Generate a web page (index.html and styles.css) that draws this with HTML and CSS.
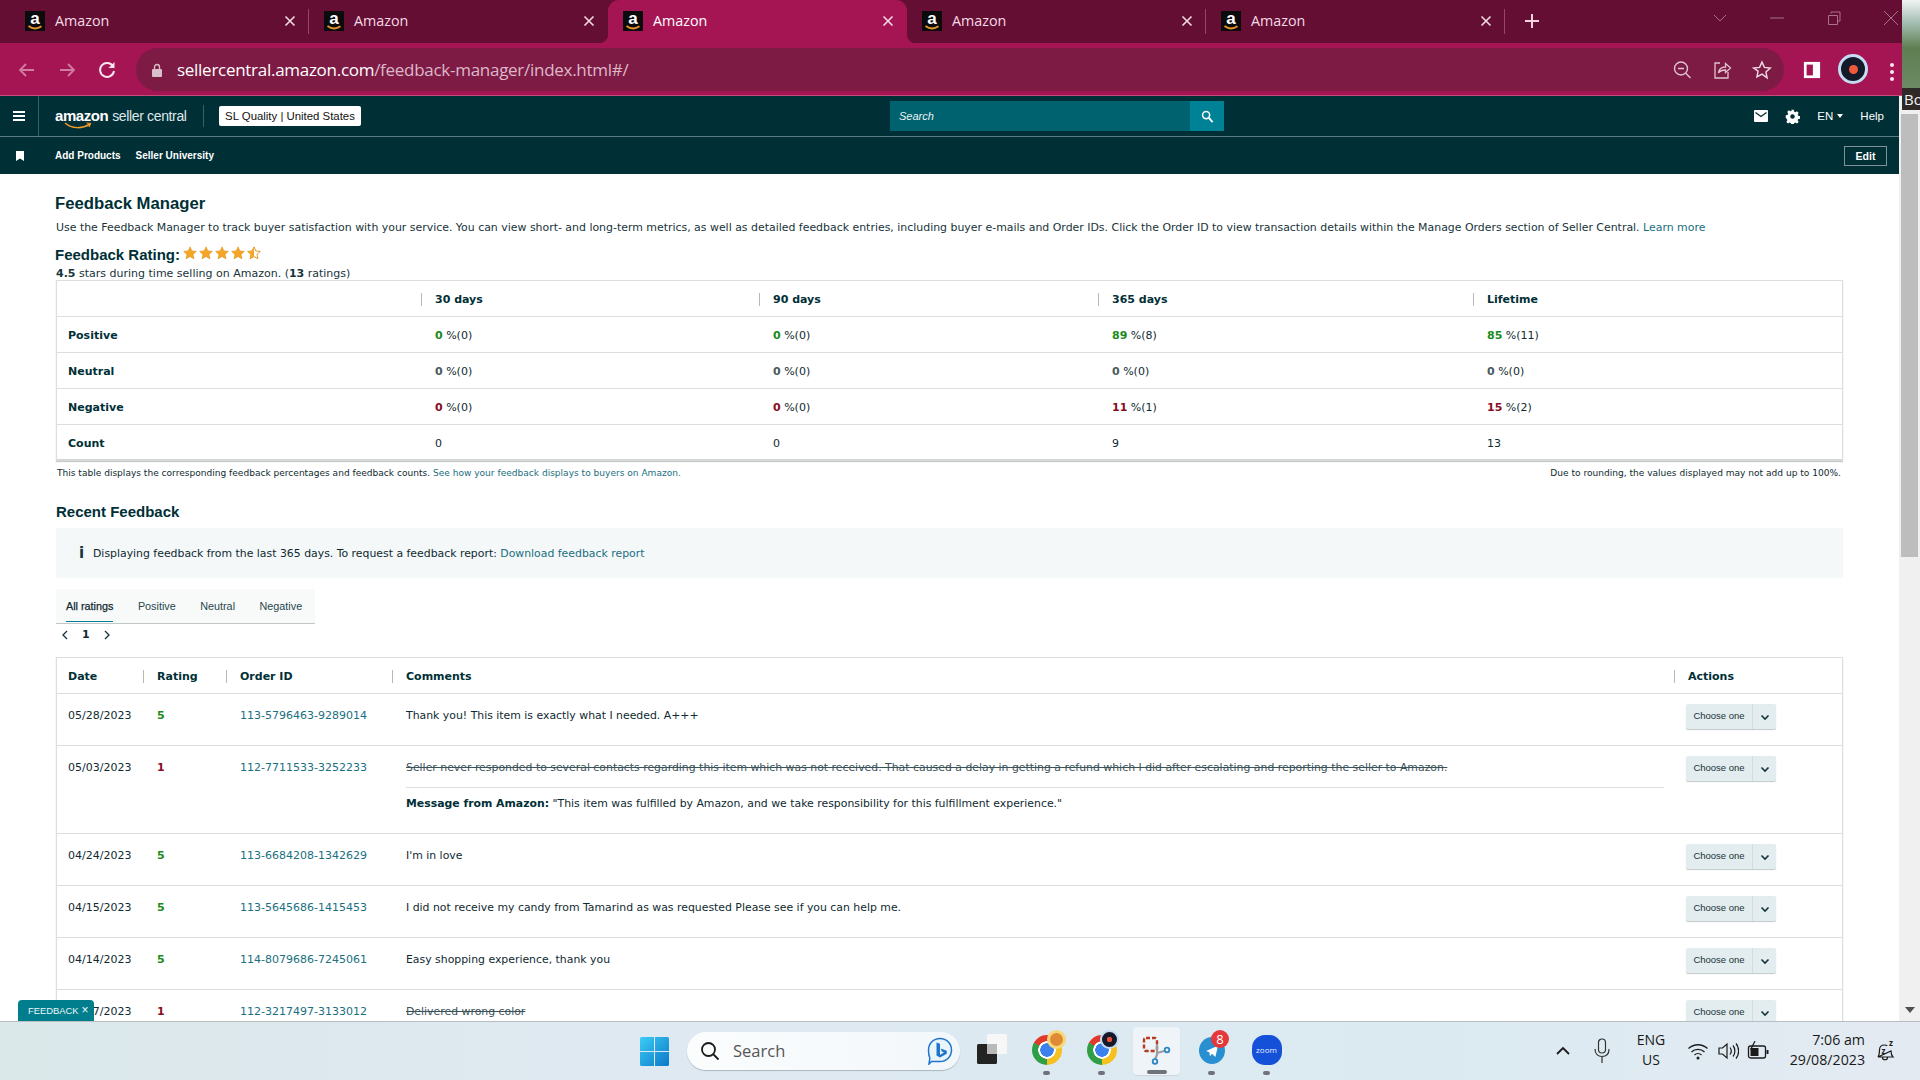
FILE: index.html
```html
<!DOCTYPE html>
<html lang="en">
<head>
<meta charset="utf-8">
<title>Amazon</title>
<link rel="stylesheet" href="styles.css">
</head>
<body>
<svg class="defs" width="0" height="0" aria-hidden="true">
  <defs>
    <symbol id="fav" viewBox="0 0 20 20">
      <rect width="20" height="20" fill="#0b0b0b"/>
      <text x="10" y="13" text-anchor="middle" font-family="Liberation Sans" font-weight="700" font-size="17" fill="#fff">a</text>
      <path d="M3.500 15c4 3 9 3 13 .2" fill="none" stroke="#e8962a" stroke-width="1.800"/>
    </symbol>
    <symbol id="star" viewBox="0 0 24 24">
      <path d="M12 1.500l3.200 7 7.600.8-5.700 5.100 1.600 7.500L12 18.100l-6.700 3.800 1.600-7.500L1.200 9.300l7.600-.8z" fill="#f5a623" stroke="#d98a12" stroke-width="1"/>
    </symbol>
    <symbol id="chev" viewBox="0 0 12 12">
      <path d="M2.500 4.500L6 8l3.500-3.500" fill="none" stroke="#12343b" stroke-width="1.600"/>
    </symbol>
    <symbol id="close" viewBox="0 0 12 12">
      <path d="M1.500 1.500l9 9M10.500 1.500l-9 9" fill="none" stroke="#f3dbe5" stroke-width="1.600"/>
    </symbol>
  </defs>
</svg>

<div class="screen">
  <div class="top">
    <div class="browser">
      <div class="tabstrip">
        <div class="tab tab-sep"><svg class="fav"><use href="#fav"/></svg><span class="tab-title">Amazon</span><svg class="tab-x"><use href="#close"/></svg></div>
        <div class="tab"><svg class="fav"><use href="#fav"/></svg><span class="tab-title">Amazon</span><svg class="tab-x"><use href="#close"/></svg></div>
        <div class="tab tab-active"><svg class="fav"><use href="#fav"/></svg><span class="tab-title">Amazon</span><svg class="tab-x"><use href="#close"/></svg></div>
        <div class="tab tab-sep"><svg class="fav"><use href="#fav"/></svg><span class="tab-title">Amazon</span><svg class="tab-x"><use href="#close"/></svg></div>
        <div class="tab tab-sep"><svg class="fav"><use href="#fav"/></svg><span class="tab-title">Amazon</span><svg class="tab-x"><use href="#close"/></svg></div>
        <svg class="newtab" viewBox="0 0 16 16"><path d="M8 1v14M1 8h14" stroke="#f0d5e0" stroke-width="2"/></svg>
        <div class="winctl">
          <svg class="wc wc-v" viewBox="0 0 14 14"><path d="M1 4l6 6 6-6" fill="none" stroke="#a9718a" stroke-width="1"/></svg>
          <svg class="wc wc-m" viewBox="0 0 14 14"><path d="M0 7h14" stroke="#a9718a" stroke-width="1"/></svg>
          <svg class="wc wc-r" viewBox="0 0 14 14"><path d="M1.500 4.500h9v9h-9zM4 2.500V1h9v9h-2" fill="none" stroke="#a9718a" stroke-width="1"/></svg>
          <svg class="wc wc-x" viewBox="0 0 14 14"><path d="M0 0l14 14M14 0L0 14" stroke="#a9718a" stroke-width="1"/></svg>
        </div>
      </div>
      <div class="toolbar">
        <span class="tb-slot"><svg class="ic20" viewBox="0 0 20 20"><path d="M17 10H3M9 4l-6 6 6 6" fill="none" stroke="#cf7c9e" stroke-width="1.800"/></svg></span>
        <span class="tb-slot"><svg class="ic20" viewBox="0 0 20 20"><path d="M3 10h14M11 4l6 6-6 6" fill="none" stroke="#cf7c9e" stroke-width="1.800"/></svg></span>
        <span class="tb-slot"><svg class="ic20" viewBox="0 0 20 20"><path d="M16.200 6.500A7 7 0 1 0 17 11" fill="none" stroke="#f7e6ed" stroke-width="2"/><path d="M17.500 2v6h-6z" fill="#f7e6ed"/></svg></span>
        <div class="omnibox">
          <svg class="lock" viewBox="0 0 10 14"><path d="M2.500 6V4a2.500 2.500 0 0 1 5 0v2" fill="none" stroke="#d9bfcb" stroke-width="1.300"/><rect y="6" width="10" height="8" rx="1" fill="#d9bfcb"/></svg>
          <span class="url"><span class="url-host">sellercentral.amazon.com</span>/feedback-manager/index.html#/</span>
          <div class="omni-icons">
            <span class="tb-slot"><svg class="ic20" viewBox="0 0 20 20"><circle cx="9" cy="8.500" r="6.500" fill="none" stroke="#e0c3d0" stroke-width="1.400"/><path d="M6 8.500h6M13.800 13.300l4.700 4.700" stroke="#e0c3d0" stroke-width="1.400"/></svg></span>
            <span class="tb-slot"><svg class="ic20" viewBox="0 0 20 20"><path d="M8 3H3v15h13v-6" fill="none" stroke="#e0c3d0" stroke-width="1.300"/><path d="M6.500 13c.5-4 3.500-6 7-6V3.500L18.500 8l-5 4.500V10c-3 0-5.500.8-7 3z" fill="none" stroke="#e0c3d0" stroke-width="1.300"/></svg></span>
            <span class="tb-slot"><svg class="ic20" viewBox="0 0 24 24"><path d="M12 2.500l2.900 6.400 7 .8-5.200 4.700 1.400 6.900L12 16.900l-6.100 3.400 1.400-6.900L2.100 9.700l7-.8z" fill="none" stroke="#f0dbe4" stroke-width="1.700"/></svg></span>
          </div>
        </div>
        <span class="tb-slot tb-panel"><svg class="ic20" viewBox="0 0 20 20"><path d="M1 1h18v18H1z" fill="#fff"/><path d="M4 4h7v12H4z" fill="#a5154f"/></svg></span>
        <span class="avatar"><span class="avatar-core"></span></span>
        <span class="tb-dots"><i></i><i></i><i></i></span>
      </div>
    </div>
    <div class="wall"><span class="wall-label">Bo</span></div>
  </div>

  <div class="viewport">
    <div class="page">
      <header class="sc-head">
        <span class="burger"><i></i><i></i><i></i></span>
        <span class="logo"><span class="logo-a">amazon</span><span class="logo-b">seller central</span><svg class="logo-smile" viewBox="0 0 28 8"><path d="M1 1c7 6 17 6 25 1" fill="none" stroke="#f09a28" stroke-width="1.500"/><path d="M22.500 1l4 .5-1.500 3.500" fill="none" stroke="#f09a28" stroke-width="1.200"/></svg></span>
        <span class="head-div"></span>
        <span class="acct">SL Quality | United States</span>
        <div class="search"><span class="search-in">Search</span><span class="search-btn"><svg viewBox="0 0 14 14" width="13" height="13"><circle cx="5.500" cy="5.500" r="3.800" fill="none" stroke="#fff" stroke-width="1.600"/><path d="M8.500 8.500l4 4.500" stroke="#fff" stroke-width="2"/></svg></span></div>
        <div class="head-right">
          <svg class="mail" viewBox="0 0 14 12"><rect width="14" height="12" rx="1" fill="#fff"/><path d="M1.500 2.500L7 6.500l5.500-4" fill="none" stroke="#002f36" stroke-width="1.300"/></svg>
          <svg class="gear" viewBox="0 0 16 16"><path d="M6.500 0h3l.4 2.200 1.500.7 1.900-1.200 2 2.100-1.200 1.800.7 1.600 2.200.4v3l-2.200.4-.7 1.500 1.200 1.900-2 2-1.900-1.200-1.500.7-.4 2.200h-3l-.4-2.200-1.500-.7-1.900 1.200-2-2 1.200-1.900-.7-1.500L0 9.500v-3l2.200-.4.700-1.600L1.700 2.700l2-2.100 1.900 1.200 1.500-.7z" transform="translate(.8 .8) scale(.9)" fill="#fff"/><circle cx="8" cy="8" r="2.400" fill="#002f36"/></svg>
          <span class="lang">EN<i class="caret"></i></span>
          <span class="help">Help</span>
        </div>
      </header>
      <nav class="sc-nav">
        <svg class="bookmark" viewBox="0 0 8 10"><path d="M0 0h8v10L4 7.500 0 10z" fill="#fff"/></svg>
        <a class="nav-link">Add Products</a>
        <a class="nav-link">Seller University</a>
        <span class="edit">Edit</span>
      </nav>

      <main class="content">
        <h1 class="h-main">Feedback Manager</h1>
        <p class="desc">Use the Feedback Manager to track buyer satisfaction with your service. You can view short- and long-term metrics, as well as detailed feedback entries, including buyer e-mails and Order IDs. Click the Order ID to view transaction details within the Manage Orders section of Seller Central. <a class="link">Learn more</a></p>
        <div class="rating-title">Feedback Rating:<span class="stars"><svg><use href="#star"/></svg><svg><use href="#star"/></svg><svg><use href="#star"/></svg><svg><use href="#star"/></svg><svg class="star-half" viewBox="0 0 24 24"><path d="M12 1.500l3.200 7 7.600.8-5.700 5.100 1.600 7.500L12 18.100l-6.700 3.800 1.600-7.500L1.200 9.300l7.600-.8z" fill="#fff" stroke="#d98a12" stroke-width="1.500"/><path d="M12 1.500v16.600l-6.700 3.800 1.600-7.500L1.200 9.300l7.600-.8z" fill="#f5a623"/></svg></span></div>
        <div class="rating-sub"><b>4.5</b> stars during time selling on Amazon. (<b>13</b> ratings)</div>

        <table class="tbl tbl-sum">
          <colgroup><col class="s1"><col class="s2"><col class="s3"><col class="s4"><col class="s5"></colgroup>
          <thead><tr><th></th><th><span class="th-in">30 days</span></th><th><span class="th-in">90 days</span></th><th><span class="th-in">365 days</span></th><th><span class="th-in">Lifetime</span></th></tr></thead>
          <tbody>
            <tr><th class="rowh">Positive</th><td><b class="pos">0</b> %(0)</td><td><b class="pos">0</b> %(0)</td><td><b class="pos">89</b> %(8)</td><td><b class="pos">85</b> %(11)</td></tr>
            <tr><th class="rowh">Neutral</th><td><b class="neu">0</b> %(0)</td><td><b class="neu">0</b> %(0)</td><td><b class="neu">0</b> %(0)</td><td><b class="neu">0</b> %(0)</td></tr>
            <tr><th class="rowh">Negative</th><td><b class="neg">0</b> %(0)</td><td><b class="neg">0</b> %(0)</td><td><b class="neg">11</b> %(1)</td><td><b class="neg">15</b> %(2)</td></tr>
            <tr><th class="rowh">Count</th><td>0</td><td>0</td><td>9</td><td>13</td></tr>
          </tbody>
        </table>
        <div class="tbl-note"><span>This table displays the corresponding feedback percentages and feedback counts. <a class="link">See how your feedback displays to buyers on Amazon.</a></span><span>Due to rounding, the values displayed may not add up to 100%.</span></div>

        <h2 class="h-sub">Recent Feedback</h2>
        <div class="info"><span class="info-i">i</span><span>Displaying feedback from the last 365 days. To request a feedback report: <a class="link">Download feedback report</a></span></div>

        <div class="ftabs"><span class="ftab ftab-on">All ratings</span><span class="ftab">Positive</span><span class="ftab">Neutral</span><span class="ftab">Negative</span></div>
        <div class="pager">
          <svg viewBox="0 0 8 10" class="pg-ar"><path d="M6 1L2 5l4 4" fill="none" stroke="#12343b" stroke-width="1.300"/></svg>
          <b>1</b>
          <svg viewBox="0 0 8 10" class="pg-ar"><path d="M2 1l4 4-4 4" fill="none" stroke="#12343b" stroke-width="1.300"/></svg>
        </div>

        <table class="tbl tbl-fb">
          <colgroup><col class="f1"><col class="f2"><col class="f3"><col class="f4"><col class="f5"></colgroup>
          <thead><tr><th class="first">Date</th><th><span class="th-in">Rating</span></th><th><span class="th-in">Order ID</span></th><th><span class="th-in">Comments</span></th><th><span class="th-in">Actions</span></th></tr></thead>
          <tbody>
            <tr>
              <td class="first">05/28/2023</td><td><b class="pos">5</b></td><td><a class="link">113-5796463-9289014</a></td>
              <td class="cmt">Thank you! This item is exactly what I needed. A+++</td>
              <td class="act"><span class="choose"><span class="choose-t">Choose one</span><span class="choose-a"><svg><use href="#chev"/></svg></span></span></td>
            </tr>
            <tr class="tall">
              <td class="first">05/03/2023</td><td><b class="neg">1</b></td><td><a class="link">112-7711533-3252233</a></td>
              <td class="cmt cmt-split"><div class="struck struck-row">Seller never responded to several contacts regarding this item which was not received. That caused a delay in getting a refund which I did after escalating and reporting the seller to Amazon.</div><div class="amz-msg"><b>Message from Amazon:</b> "This item was fulfilled by Amazon, and we take responsibility for this fulfillment experience."</div></td>
              <td class="act"><span class="choose"><span class="choose-t">Choose one</span><span class="choose-a"><svg><use href="#chev"/></svg></span></span></td>
            </tr>
            <tr>
              <td class="first">04/24/2023</td><td><b class="pos">5</b></td><td><a class="link">113-6684208-1342629</a></td>
              <td class="cmt">I'm in love</td>
              <td class="act"><span class="choose"><span class="choose-t">Choose one</span><span class="choose-a"><svg><use href="#chev"/></svg></span></span></td>
            </tr>
            <tr>
              <td class="first">04/15/2023</td><td><b class="pos">5</b></td><td><a class="link">113-5645686-1415453</a></td>
              <td class="cmt">I did not receive my candy from Tamarind as was requested Please see if you can help me.</td>
              <td class="act"><span class="choose"><span class="choose-t">Choose one</span><span class="choose-a"><svg><use href="#chev"/></svg></span></span></td>
            </tr>
            <tr>
              <td class="first">04/14/2023</td><td><b class="pos">5</b></td><td><a class="link">114-8079686-7245061</a></td>
              <td class="cmt">Easy shopping experience, thank you</td>
              <td class="act"><span class="choose"><span class="choose-t">Choose one</span><span class="choose-a"><svg><use href="#chev"/></svg></span></span></td>
            </tr>
            <tr>
              <td class="first">04/07/2023</td><td><b class="neg">1</b></td><td><a class="link">112-3217497-3133012</a></td>
              <td class="cmt"><span class="struck">Delivered wrong color</span></td>
              <td class="act"><span class="choose"><span class="choose-t">Choose one</span><span class="choose-a"><svg><use href="#chev"/></svg></span></span></td>
            </tr>
          </tbody>
        </table>
      </main>
      <div class="fb-tag">FEEDBACK<span class="fb-x">×</span></div>
    </div>
    <div class="scrollbar">
      <div class="sb-thumb"></div>
      <i class="sb-down"></i>
    </div>
  </div>

  <footer class="taskbar">
    <svg class="winlogo" viewBox="0 0 29 29"><defs><linearGradient id="wg" x1="0" y1="0" x2="1" y2="1"><stop offset="0" stop-color="#3ccdf6"/><stop offset="1" stop-color="#0b78c8"/></linearGradient></defs><path d="M0 1.500A1.500 1.500 0 0 1 1.500 0H14v14H0zM15 0h12.500A1.500 1.500 0 0 1 29 1.500V14H15zM0 15h14v14H1.500A1.500 1.500 0 0 1 0 27.500zM15 15h14v12.500a1.500 1.500 0 0 1-1.500 1.500H15z" fill="url(#wg)"/></svg>
    <div class="tsearch">
      <svg class="ts-q" viewBox="0 0 20 20"><circle cx="8.500" cy="8.500" r="6.500" fill="none" stroke="#1a1a1a" stroke-width="1.800"/><path d="M13 13l5.500 5.500" stroke="#1a1a1a" stroke-width="1.800"/></svg>
      <span class="ts-t">Search</span>
      <svg class="ts-b" viewBox="0 0 26 28"><path d="M13 1.500c6.500 0 11.500 5 11.500 11.500S19.500 24.500 13 24.500H4.500L2 27l.8-6C1.800 18.800 1.500 16 1.500 13 1.500 6.500 6.500 1.500 13 1.500z" fill="#eaf4fb" stroke="#1f76c9" stroke-width="1.500"/><path d="M9.500 5.500l3.500 1.200v11l4-2.200-2.200-1-1-3 6 2.300v3L13 20.500l-3.500-2z" fill="#1f76c9"/></svg>
    </div>
    <div class="apps">
      <span class="app"><svg class="files" viewBox="0 0 30 30"><rect x="0" y="10" width="20" height="20" rx="1.500" fill="#232323"/><rect x="10" y="0" width="20" height="20" rx="1.500" fill="#f7f7f7"/><rect x="10" y="10" width="10" height="10" fill="#b9b9b9"/></svg></span>
      <span class="app app-dot"><span class="cr"></span><span class="cr-badge cr-b1"></span></span>
      <span class="app app-dot"><span class="cr"></span><span class="cr-badge cr-b2"></span></span>
      <span class="app app-on"><svg class="snip" viewBox="0 0 30 30"><rect x="2" y="3" width="13" height="13" rx="2" fill="none" stroke="#b83a20" stroke-width="2.400" stroke-dasharray="4 2"/><path d="M15 9v11l-2 4M15 18l7-2" fill="none" stroke="#9b9ea1" stroke-width="2.200"/><circle cx="13" cy="26.500" r="2.300" fill="none" stroke="#2a86c9" stroke-width="1.800"/><circle cx="25" cy="15" r="2.300" fill="none" stroke="#2a86c9" stroke-width="1.800"/></svg></span>
      <span class="app app-dot"><span class="tg"><svg viewBox="0 0 24 24" width="16" height="16"><path d="M3 12L21 4l-4 17-5-5-3 4-1-6z" fill="#fff"/></svg></span><span class="tg-badge">8</span></span>
      <span class="app app-dot"><span class="zoom">zoom</span></span>
    </div>
    <div class="tray">
      <svg class="tr-chev" viewBox="0 0 16 10"><path d="M2 8l6-6 6 6" fill="none" stroke="#1a1a1a" stroke-width="1.800"/></svg>
      <svg class="tr-mic" viewBox="0 0 20 26"><rect x="6.500" y="1" width="7" height="14" rx="3.500" fill="none" stroke="#333" stroke-width="1.200"/><path d="M3 11c0 5 3 7.500 7 7.500s7-2.500 7-7.500M10 18.500V25" fill="none" stroke="#333" stroke-width="1.200"/></svg>
      <div class="tr-lang"><span>ENG</span><span>US</span></div>
      <div class="tr-sys">
        <svg class="tr-ic" viewBox="0 0 22 20"><path d="M1.500 7.500c5.500-5 13.500-5 19 0M4.500 11c3.500-3.500 9.500-3.500 13 0M7.500 14c2-1.800 5-1.800 7 0" fill="none" stroke="#1a1a1a" stroke-width="1.300"/><circle cx="11" cy="17" r="1.500" fill="#1a1a1a"/></svg>
        <svg class="tr-ic" viewBox="0 0 22 20"><path d="M2 7h3.500L10 3v14l-4.500-4H2z" fill="none" stroke="#1a1a1a" stroke-width="1.200"/><path d="M13 6.500c1.500 2 1.500 5 0 7M16 4.500c2.500 3 2.500 8 0 11M19 2.500c3.500 4 3.500 11 0 15" fill="none" stroke="#1a1a1a" stroke-width="1.200"/></svg>
        <svg class="tr-ic" viewBox="0 0 22 20"><rect x="1.500" y="5" width="17" height="12" rx="2" fill="none" stroke="#1a1a1a" stroke-width="1.300"/><rect x="3.500" y="7" width="8" height="8" fill="#1a1a1a"/><path d="M19.500 9h2v4h-2z" fill="#1a1a1a"/><path d="M8 0L4 8h4l-1 5" fill="none" stroke="#1a1a1a" stroke-width="1.200"/></svg>
      </div>
      <div class="clock"><span>7:06 am</span><span>29/08/2023</span></div>
      <svg class="tr-bell" viewBox="0 0 24 24"><path d="M5 18c1.500-2 1.500-4 1.500-7 0-3 2-5 5-5 1 0 2 .2 2.800.7M18 12c0 2.500.5 4.500 2 6H5zM9.500 18.500c0 3 5 3 5 0" fill="none" stroke="#1a1a1a" stroke-width="1.200"/><text x="8.500" y="15" font-family="Open Sans" font-size="8" font-weight="700" fill="#1a1a1a">z</text><text x="16" y="7" font-family="Open Sans" font-size="8" font-weight="700" fill="#1a1a1a">z</text></svg>
    </div>
  </footer>
</div>
</body>
</html>
```

FILE: styles.css
```css
* { box-sizing: border-box; }
html, body { margin: 0; padding: 0; height: 100%; overflow: hidden; background: #fff; }
body { font-family: "DejaVu Sans", sans-serif; font-size: 10.880px; color: #0f2a30; }
.defs { display: block; height: 0; width: 0; }
.screen { display: flex; flex-direction: column; width: 1920px; height: 1080px; overflow: hidden; }

/* browser chrome */
.top { display: flex; height: 96px; flex: none; }
.browser { width: 1902px; flex: none; }
.wall { position: relative; flex: 1; background: linear-gradient(#f0f4f2 0, #a9c2b8 22%, #5f7f52 50%, #6f8c68 100%); z-index: 3; }
.wall-label { position: absolute; left: 0; top: 88px; width: 18px; height: 22px; background: #2f2a28; color: #f2f2f2; font: 15px/22px "Open Sans", sans-serif; padding-left: 2px; overflow: hidden; }

.tabstrip { display: flex; height: 43px; background: #650e34; padding-left: 10px; }
.tab { position: relative; width: 299px; flex: none; display: flex; align-items: center; padding: 0 0 0 15px; color: #f3dbe5; }
.tab-sep::after { content: ""; position: absolute; right: 0; top: 9px; height: 25px; width: 1px; background: #93486a; }
.tab-active { background: #a51553; border-radius: 11px 11px 0 0; color: #fff; }
.tab-active::before { content: ""; position: absolute; left: -9px; bottom: 0; width: 9px; height: 9px; background: radial-gradient(circle at 0 0, transparent 9px, #a51553 9.500px); }
.tab-active::after { content: ""; position: absolute; right: -9px; bottom: 0; width: 9px; height: 9px; background: radial-gradient(circle at 100% 0, transparent 9px, #a51553 9.500px); }
.fav { width: 20px; height: 20px; flex: none; margin-top: -2px; }
.tab-title { font: 14.300px/20px "Open Sans", sans-serif; margin: -2px 0 0 10px; }
.tab-x { width: 12px; height: 12px; margin: -2px 13px 0 auto; flex: none; }
.newtab { width: 16px; height: 16px; margin: 13px 0 0 19px; flex: none; }
.winctl { display: flex; align-items: center; margin-left: 173px; height: 36px; gap: 43px; }
.wc { width: 14px; height: 14px; flex: none; }

.toolbar { display: flex; height: 53px; padding: 5px 0 0 7px; background: #a51553; border-bottom: 1px solid #c64a7a; align-items: flex-start; }
.tb-slot { width: 40px; height: 43px; flex: none; display: flex; align-items: center; justify-content: center; }
.ic20 { width: 20px; height: 20px; }
.omnibox { width: 1648px; height: 43px; margin-left: 9px; padding: 0 2px 0 16px; border-radius: 22px; background: #7e1b45; display: flex; align-items: center; flex: none; }
.lock { width: 10px; height: 14px; flex: none; }
.url { margin-left: 15px; font: 17px/24px "Open Sans", sans-serif; letter-spacing: -0.28px; color: #dcb8c8; white-space: nowrap; }
.url-host { color: #fff; }
.omni-icons { margin-left: auto; display: flex; }
.tb-panel { margin-left: 8px; }
.tb-panel .ic20 { width: 18px; height: 18px; }
.avatar { width: 30px; height: 30px; margin: 6px 0 0 6px; border-radius: 50%; background: #141a2a; border: 3px solid #c6dcf2; display: flex; align-items: center; justify-content: center; flex: none; }
.avatar-core { width: 9px; height: 9px; border-radius: 50%; background: #ef5a3c; }
.tb-dots { display: flex; flex-direction: column; align-items: center; gap: 3px; width: 18px; margin: 15px 0 0 15px; flex: none; }
.tb-dots i { width: 4px; height: 4px; border-radius: 50%; background: #f7e6ed; }

/* viewport */
.viewport { flex: 1; display: flex; min-height: 0; }
.page { position: relative; width: 1899px; flex: none; overflow: hidden; }
.scrollbar { flex: 1; background: #f0f0f0; display: flex; flex-direction: column; align-items: center; padding: 18px 0 8px; }
.sb-thumb { width: 17px; height: 443px; background: #bdbdbd; }
.sb-down { margin-top: auto; width: 0; height: 0; border: 5px solid transparent; border-top: 6px solid #505050; border-bottom: 0; }

/* seller central head */
.sc-head { display: flex; align-items: center; height: 41px; background: #002f36; border-bottom: 1px solid #5c7a80; color: #fff; }
.burger { width: 39px; height: 40px; flex: none; border-right: 1px solid #3e5f65; display: flex; flex-direction: column; justify-content: center; align-items: center; gap: 2px; }
.burger i { width: 12px; height: 2px; background: #fff; }
.logo { position: relative; margin-left: 16px; display: flex; align-items: baseline; width: 133px; white-space: nowrap; flex: none; }
.logo-a { font: 700 15px/20px "Liberation Sans", sans-serif; letter-spacing: -0.45px; }
.logo-b { margin-left: 4px; font: 14px/20px "Liberation Sans", sans-serif; letter-spacing: -0.35px; color: #dfe8ea; }
.logo-smile { position: absolute; left: 9px; top: 16px; width: 28px; height: 8px; }
.head-div { width: 1px; height: 22px; background: #3e5f65; margin-left: 15px; flex: none; }
.acct { margin-left: 15px; width: 142px; height: 20px; background: #fff; color: #0f1111; border-radius: 2px; font: 11.400px/20px "Liberation Sans", sans-serif; text-align: center; white-space: nowrap; flex: none; }
.search { margin-left: 529px; width: 334px; height: 30px; background: #00626f; display: flex; flex: none; }
.search-in { flex: 1; font: italic 11px/30px "Liberation Sans", sans-serif; padding-left: 9px; color: #eaf3f4; }
.search-btn { width: 34px; background: #008296; display: flex; align-items: center; justify-content: center; }
.head-right { margin-left: auto; padding-right: 15px; display: flex; align-items: center; font: 11.500px/16px "Liberation Sans", sans-serif; }
.mail { width: 14px; height: 12px; }
.gear { width: 15px; height: 15px; margin-left: 17px; }
.lang { margin-left: 17px; display: flex; align-items: center; }
.caret { margin-left: 4px; width: 0; height: 0; border: 3.500px solid transparent; border-top: 4px solid #fff; border-bottom: 0; }
.help { margin-left: 17px; }

.sc-nav { display: flex; align-items: center; height: 37px; background: #002f36; color: #fff; padding-left: 16px; }
.bookmark { width: 8px; height: 10px; margin-right: 31px; flex: none; }
.nav-link { font: 700 10px/16px "Liberation Sans", sans-serif; margin-right: 15px; padding-top: 1px; }
.edit { margin-left: auto; margin-right: 12px; width: 43px; height: 20px; border: 1px solid #7b9297; font: 700 10.500px/18px "Liberation Sans", sans-serif; text-align: center; }

/* content */
.content { padding: 20px 0 0 56px; width: 1843px; }
.h-main { margin: 0 0 0 -1px; font: 700 16.700px/20px "Liberation Sans", sans-serif; color: #002f36; }
.desc { margin: 6px 0 0 0; font-size: 10.930px; line-height: 16px; white-space: nowrap; color: #17343a; }
.link { color: #1a6f80; text-decoration: none; }
.rating-title { margin: 9px 0 0 -1px; display: flex; align-items: flex-start; height: 22px; font: 700 15px/20px "Liberation Sans", sans-serif; color: #002f36; }
.stars { display: flex; margin-left: 3px; gap: 2px; margin-top: 1px; }
.stars svg { width: 14px; height: 14px; }
.rating-sub { height: 13px; line-height: 14px; font-size: 11px; color: #17343a; }
.tbl { width: 100%; border-collapse: separate; border-spacing: 0; table-layout: fixed; border: 1px solid #dcdfe0; border-bottom: 0; box-shadow: 0 1px 1px #c9cccd; }
.tbl th, .tbl td { font-size: 11px; text-align: left; padding: 0; border-bottom: 1px solid #dcdfe0; white-space: nowrap; }
.tbl th { font-weight: 700; color: #002f36; }
.tbl-sum th, .tbl-sum td { height: 36px; padding: 2px 0 0 14px; vertical-align: middle; }
.tbl-sum th:first-child { padding-left: 11px; }
.tbl-sum thead th:not(:first-child), .tbl-fb thead th:not(.first) { padding-left: 0; }
.th-in { display: block; border-left: 1px solid #b5b9ba; padding-left: 13px; line-height: 13px; }
.tbl-sum tbody tr:last-child th, .tbl-sum tbody tr:last-child td { border-bottom: 2px solid #d4d7d8; }
.s1 { width: 364px; } .s2 { width: 338px; } .s3 { width: 339px; } .s4 { width: 375px; } .s5 { width: auto; }
.pos { color: #1a8a1a; } .neg { color: #8a0d1f; } .neu { color: #4a5a5e; }
.tbl-note { display: flex; justify-content: space-between; margin-top: 5px; padding: 0 2px 0 1px; font-size: 9.050px; line-height: 14px; }
.h-sub { margin: 22px 0 0 0; font: 700 15px/20px "Liberation Sans", sans-serif; color: #002f36; }
.info { margin-top: 6px; height: 50px; background: #f5f8f9; display: flex; align-items: center; padding-left: 23px; }
.info-i { width: 14px; font: 700 15px/16px "DejaVu Sans", sans-serif; color: #12343b; }
.ftabs { margin-top: 11px; width: 259px; height: 35px; display: flex; background: #f8f9f9; border-bottom: 1px solid #c4c7c8; padding-left: 10px; font: 10.800px/34px "Liberation Sans", sans-serif; color: #27474e; }
.ftab { margin-right: 24.500px; height: 33px; line-height: 35px; white-space: nowrap; }
.ftab-on { color: #0f2a30; -webkit-text-stroke: 0.25px #0f2a30; border-bottom: 1px solid #008296; }
.pager { display: flex; align-items: center; height: 22px; padding-left: 5px; font-size: 11px; gap: 13px; }
.pager b { margin-top: -1px; }
.pg-ar { width: 8px; height: 10px; margin-top: -1px; }
.tbl-fb { margin-top: 11px; }
.f1 { width: 86px; } .f2 { width: 83px; } .f3 { width: 166px; } .f4 { width: 1282px; } .f5 { width: auto; }
.tbl-fb thead th { height: 36px; padding-top: 2px; }
.tbl-fb th.first { padding-left: 11px; }
.tbl-fb tbody td { height: 52px; vertical-align: top; padding: 15px 0 0 14px; line-height: 14px; }
.tbl-fb tbody td.first { padding-left: 11px; }
.tbl-fb tbody tr.tall td { height: 88px; }
.tbl-fb tbody td.act { padding: 10px 0 0 12px; }
.tbl-fb tbody td.cmt { font-size: 10.880px; }
.tbl-fb tbody td.cmt-split { padding-right: 10px; }
.struck { text-decoration: line-through; color: #3c5359; }
.struck-row { height: 27px; border-bottom: 1px solid #dcdfe0; white-space: nowrap; }
.amz-msg { margin-top: 9px; }
.amz-msg b { color: #002f36; }
.choose { display: flex; width: 90px; height: 25px; background: #e3ecee; border-radius: 2px; box-shadow: 0 1px 1px #c2c8ca; font: 9.500px/24px "Liberation Sans", sans-serif; color: #17343a; }
.choose-t { width: 67px; text-align: center; border-right: 1px solid #d2dcde; }
.choose-a { flex: 1; display: flex; align-items: center; justify-content: center; }
.choose-a svg { width: 12px; height: 12px; }
.fb-tag { position: absolute; left: 18px; bottom: 0; width: 76px; height: 21px; background: #007e8e; border-radius: 4px 4px 0 0; color: #eef7f8; font: 9.400px/21px "Liberation Sans", sans-serif; padding-left: 10px; white-space: nowrap; }
.fb-x { margin-left: 3px; font-size: 12px; }

/* taskbar */
.taskbar { flex: none; height: 59px; display: flex; align-items: center; padding-left: 640px; border-top: 1px solid #b9bec0; background: linear-gradient(90deg, #dbe8ea 0, #dfe9f2 35%, #dbeaf1 75%, #e4eaf2 100%); color: #1a1a1a; }
.winlogo { width: 29px; height: 29px; flex: none; }
.tsearch { margin-left: 18px; width: 273px; height: 38px; border-radius: 19px; background: linear-gradient(90deg, #fbfdfd, #f2f7fb); box-shadow: 0 1px 1px #aab6be; display: flex; align-items: center; padding-left: 13px; flex: none; }
.ts-q { width: 20px; height: 20px; flex: none; }
.ts-t { margin-left: 13px; font: 16.500px/22px "Open Sans", sans-serif; color: #555; }
.ts-b { width: 26px; height: 28px; margin-left: auto; margin-right: 7px; }
.apps { display: flex; margin-left: 8px; gap: 8px; flex: none; }
.app { position: relative; width: 47px; height: 48px; display: flex; align-items: center; justify-content: center; border-radius: 4px; }
.app-dot::after { content: ""; position: absolute; left: 20px; bottom: 0; width: 7px; height: 4px; border-radius: 2px; background: #6f7479; }
.app-on { background: #eef4f8; box-shadow: 0 1px 1px #cfd8de; }
.app-on::after { content: ""; position: absolute; left: 14px; bottom: 1px; width: 20px; height: 4px; border-radius: 2px; background: #6f7479; }
.files { width: 30px; height: 30px; margin-top: -4px; }
.cr { width: 30px; height: 30px; border-radius: 50%; margin-top: -2px; background: radial-gradient(circle, #3b82ee 0 6.500px, #fff 7px 8.500px, transparent 9px), conic-gradient(from -60deg, #e3392d 0 120deg, #f6c01f 120deg 240deg, #2f9e44 240deg 360deg); }
.cr-badge { position: absolute; top: 3px; left: 24px; width: 19px; height: 19px; border-radius: 50%; }
.cr-b1 { background: #e08a35; border: 3px solid #f6d77a; }
.cr-b2 { background: radial-gradient(circle, #f04a3a 0 2.500px, #141a2a 3px); border: 2px solid #c6dcf2; left: 22px; }
.snip { width: 30px; height: 30px; margin-top: -3px; }
.tg { width: 26px; height: 27px; border-radius: 50%; background: #2a8fd0; display: flex; align-items: center; justify-content: center; margin-top: -1px; }
.tg-badge { position: absolute; left: 23px; top: 3px; width: 18px; height: 18px; border-radius: 50%; background: #e5383b; color: #fff; font: 13px/18px "Open Sans", sans-serif; text-align: center; }
.zoom { width: 30px; height: 30px; border-radius: 13px; background: #1550d8; color: #e8efff; font: 8px/30px "Open Sans", sans-serif; text-align: center; margin-top: -2px; }
.tray { margin-left: auto; padding-right: 23px; display: flex; align-items: center; flex: none; }
.tr-chev { width: 16px; height: 10px; }
.tr-mic { width: 20px; height: 26px; margin-left: 21px; }
.tr-lang { margin-left: 19px; width: 40px; display: flex; flex-direction: column; align-items: center; font: 14px/20px "Open Sans", sans-serif; padding-bottom: 2px; }
.tr-sys { display: flex; margin-left: 16px; gap: 8px; }
.tr-ic { width: 22px; height: 20px; }
.clock { margin-left: 20px; width: 76px; display: flex; flex-direction: column; align-items: flex-end; font: 14.200px/20px "Open Sans", sans-serif; white-space: nowrap; padding-bottom: 2px; }
.tr-bell { width: 24px; height: 24px; margin-left: 8px; }
```
